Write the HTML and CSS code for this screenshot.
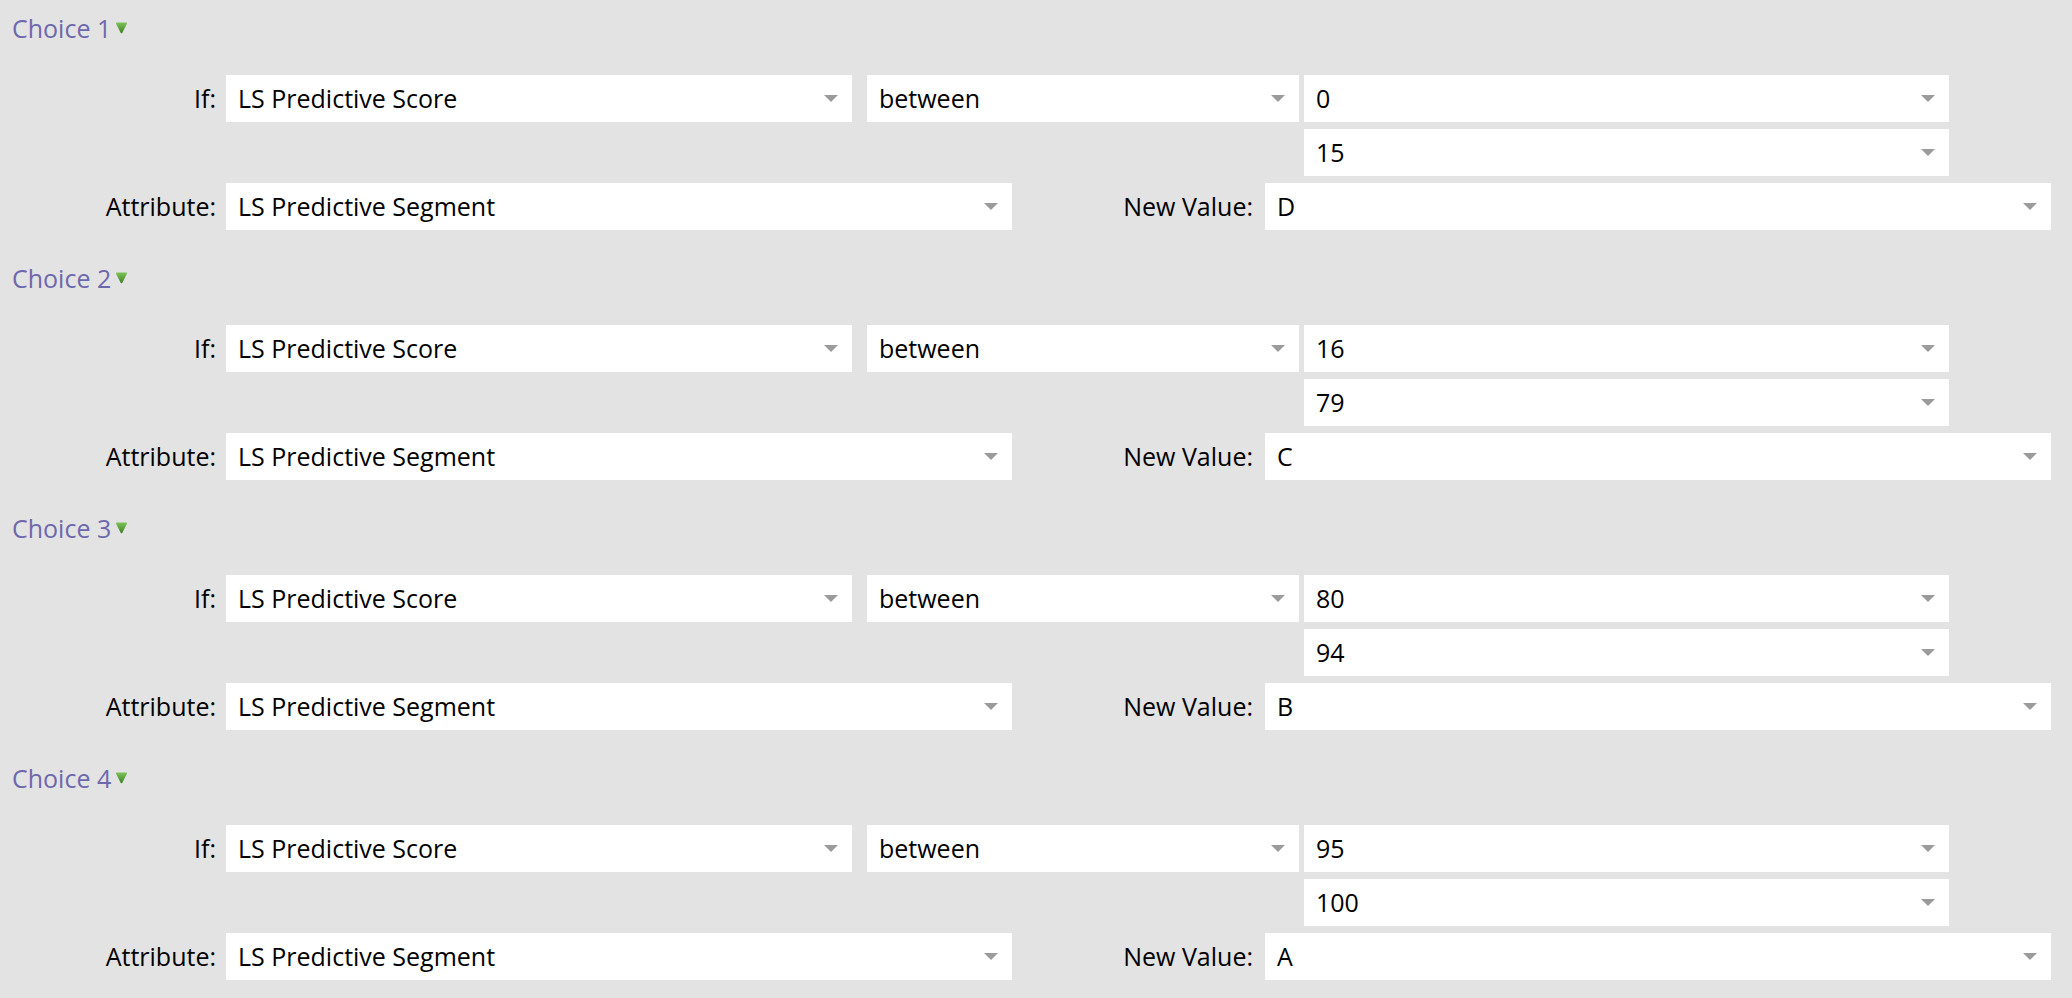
FILE: index.html
```html
<html>
<head><meta http-equiv="Content-Type" content="text/html; charset=utf-8">
<link rel="stylesheet" href="styles.css">
</head>
<body>
<div class="choices">

  <div class="choice">
    <div class="ctitle">Choice 1<svg class="tri" width="13" height="12" viewBox="0 0 12 11"><defs><linearGradient id="g1" x1="0" y1="0" x2="0" y2="1"><stop offset="0" stop-color="#7cc45a"/><stop offset="1" stop-color="#3f7f22"/></linearGradient></defs><path d="M1 1.5 Q0.5 0.5 1.8 0.5 L10.2 0.5 Q11.5 0.5 11 1.5 L6.8 9.8 Q6 11 5.2 9.8 Z" fill="url(#g1)"/></svg></div>
    <div class="row">
      <div class="lbl">If:</div>
      <div class="sel s-field">LS Predictive Score<span class="arr"></span></div>
      <div class="sel s-op">between<span class="arr"></span></div>
      <div class="vals">
        <div class="sel s-val">0<span class="arr"></span></div>
        <div class="sel s-val">15<span class="arr"></span></div>
      </div>
    </div>
    <div class="row">
      <div class="lbl">Attribute:</div>
      <div class="sel s-attr">LS Predictive Segment<span class="arr"></span></div>
      <div class="lbl2">New Value:</div>
      <div class="sel s-attr">D<span class="arr"></span></div>
    </div>
  </div>

  <div class="choice">
    <div class="ctitle">Choice 2<svg class="tri" width="13" height="12" viewBox="0 0 12 11"><defs><linearGradient id="g2" x1="0" y1="0" x2="0" y2="1"><stop offset="0" stop-color="#7cc45a"/><stop offset="1" stop-color="#3f7f22"/></linearGradient></defs><path d="M1 1.5 Q0.5 0.5 1.8 0.5 L10.2 0.5 Q11.5 0.5 11 1.5 L6.8 9.8 Q6 11 5.2 9.8 Z" fill="url(#g2)"/></svg></div>
    <div class="row">
      <div class="lbl">If:</div>
      <div class="sel s-field">LS Predictive Score<span class="arr"></span></div>
      <div class="sel s-op">between<span class="arr"></span></div>
      <div class="vals">
        <div class="sel s-val">16<span class="arr"></span></div>
        <div class="sel s-val">79<span class="arr"></span></div>
      </div>
    </div>
    <div class="row">
      <div class="lbl">Attribute:</div>
      <div class="sel s-attr">LS Predictive Segment<span class="arr"></span></div>
      <div class="lbl2">New Value:</div>
      <div class="sel s-attr">C<span class="arr"></span></div>
    </div>
  </div>

  <div class="choice">
    <div class="ctitle">Choice 3<svg class="tri" width="13" height="12" viewBox="0 0 12 11"><defs><linearGradient id="g3" x1="0" y1="0" x2="0" y2="1"><stop offset="0" stop-color="#7cc45a"/><stop offset="1" stop-color="#3f7f22"/></linearGradient></defs><path d="M1 1.5 Q0.5 0.5 1.8 0.5 L10.2 0.5 Q11.5 0.5 11 1.5 L6.8 9.8 Q6 11 5.2 9.8 Z" fill="url(#g3)"/></svg></div>
    <div class="row">
      <div class="lbl">If:</div>
      <div class="sel s-field">LS Predictive Score<span class="arr"></span></div>
      <div class="sel s-op">between<span class="arr"></span></div>
      <div class="vals">
        <div class="sel s-val">80<span class="arr"></span></div>
        <div class="sel s-val">94<span class="arr"></span></div>
      </div>
    </div>
    <div class="row">
      <div class="lbl">Attribute:</div>
      <div class="sel s-attr">LS Predictive Segment<span class="arr"></span></div>
      <div class="lbl2">New Value:</div>
      <div class="sel s-attr">B<span class="arr"></span></div>
    </div>
  </div>

  <div class="choice">
    <div class="ctitle">Choice 4<svg class="tri" width="13" height="12" viewBox="0 0 12 11"><defs><linearGradient id="g4" x1="0" y1="0" x2="0" y2="1"><stop offset="0" stop-color="#7cc45a"/><stop offset="1" stop-color="#3f7f22"/></linearGradient></defs><path d="M1 1.5 Q0.5 0.5 1.8 0.5 L10.2 0.5 Q11.5 0.5 11 1.5 L6.8 9.8 Q6 11 5.2 9.8 Z" fill="url(#g4)"/></svg></div>
    <div class="row">
      <div class="lbl">If:</div>
      <div class="sel s-field">LS Predictive Score<span class="arr"></span></div>
      <div class="sel s-op">between<span class="arr"></span></div>
      <div class="vals">
        <div class="sel s-val">95<span class="arr"></span></div>
        <div class="sel s-val">100<span class="arr"></span></div>
      </div>
    </div>
    <div class="row">
      <div class="lbl">Attribute:</div>
      <div class="sel s-attr">LS Predictive Segment<span class="arr"></span></div>
      <div class="lbl2">New Value:</div>
      <div class="sel s-attr">A<span class="arr"></span></div>
    </div>
  </div>

</div>
</body>
</html>
```

FILE: styles.css
```css
body {
	margin: 0;
	background: #e3e3e3;
	font-family: "Open Sans", "Liberation Sans", sans-serif;
	font-size: 25px;
	color: #000000;
}
.choice {
	padding-top: 11px;
	margin-bottom: 20px;
}
.ctitle {
	color: #6d68ae;
	line-height: 34px;
	height: 34px;
	padding-left: 12px;
	margin-bottom: 30px;
}
.ctitle .tri {
	margin-left: 4px;
	vertical-align: 4px;
}
.row {
	display: flex;
	align-items: flex-start;
	margin-bottom: 7px;
}
.lbl {
	width: 216px;
	padding-right: 10px;
	text-align: right;
	line-height: 47px;
}
.lbl2 {
	width: 241px;
	padding-right: 12px;
	text-align: right;
	line-height: 47px;
}
.sel {
	position: relative;
	background: #ffffff;
	height: 47px;
	line-height: 47px;
	padding-left: 12px;
	box-sizing: border-box;
	white-space: nowrap;
}
.sel .arr {
	position: absolute;
	right: 14px;
	top: 20px;
	width: 0;
	height: 0;
	border-left: 7.5px solid transparent;
	border-right: 7.5px solid transparent;
	border-top: 7px solid #9b9b9b;
}
.s-field { width: 626px; }
.s-op { width: 432px; margin-left: 15px; }
.s-val { width: 645px; }
.s-attr { width: 786px; }
.vals {
	display: flex;
	flex-direction: column;
	gap: 7px;
	margin-left: 5px;
}
```
